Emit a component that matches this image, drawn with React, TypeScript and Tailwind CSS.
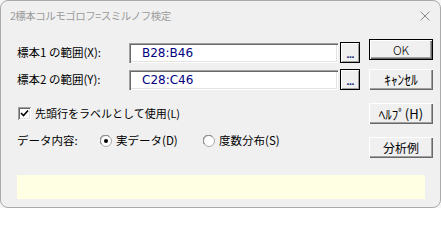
import React from "react";

const JP = "font-['Noto_Sans_CJK_JP','Noto_Sans',sans-serif]";

function Btn({ label, def, size }: { label: string; def?: boolean; size?: string }) {
  return (
    <div
      className={
        "w-[64px] h-[21px] flex items-center justify-center bg-[#f0f0f0] text-black leading-none " +
        (def
          ? "border border-black shadow-[inset_1px_1px_0_#fff,inset_-1px_-1px_0_#696969,inset_-2px_-2px_0_#a0a0a0]"
          : "shadow-[inset_1px_1px_0_#fff,inset_-1px_-1px_0_#696969,inset_-2px_-2px_0_#a0a0a0]")
      }
    >
      <span className={JP + " " + (size || "text-[12px]")}>{label}</span>
    </div>
  );
}

function RangeRow({ label, value }: { label: string; value: string }) {
  return (
    <div className="flex items-center h-[21px]">
      <div className={"w-[112px] text-[11.5px] leading-none text-black " + JP}>{label}</div>
      <div className="w-[209px] h-[20px] bg-white flex items-center pl-[13px] shadow-[inset_1px_1px_0_#a0a0a0,inset_2px_2px_0_#696969,inset_-1px_-1px_0_#fff,inset_-2px_-2px_0_#e3e3e3]">
        <span className="font-['DejaVu_Sans',sans-serif] text-[12px] leading-none text-[#000080] pt-[1px]">{value}</span>
      </div>
      <div className="ml-[2px] w-[20px] h-[21px] border border-black bg-[#f0f0f0] flex items-end justify-center pb-[2px] shadow-[inset_1px_1px_0_#fff,inset_-1px_-1px_0_#a0a0a0]">
        <span className="font-['DejaVu_Sans',sans-serif] text-[9px] leading-none font-bold text-[#1a2a7a] tracking-[-1px]">...</span>
      </div>
    </div>
  );
}

function Radio({ on }: { on?: boolean }) {
  return (
    <svg width="12" height="12" viewBox="0 0 12 12">
      <circle cx="6" cy="6" r="5.5" fill="#fff" stroke="#a8a8a8" />
      <path d="M1.6 9.2 A5 5 0 0 1 9.2 1.6" fill="none" stroke="#7a7a7a" strokeWidth="1" />
      {on && <circle cx="6" cy="6" r="2" fill="#000" />}
    </svg>
  );
}

export default function App() {
  return (
    <div className="w-[441px] h-[208px] bg-[#f6f6f6]">
      <div className="w-[441px] h-[208px] rounded-[8px] border border-[#ababab] bg-[#f0f0f0] flex flex-col overflow-hidden">
        {/* title bar */}
        <div className="h-[29px] flex items-center pl-[9px] pr-[10px] pt-[1px]">
          <span className={"text-[10.5px] leading-none tracking-[-0.5px] text-[#9a9a9a] " + JP}>
            2標本コルモゴロフ=スミルノフ検定
          </span>
          <div className="ml-auto">
            <svg width="10" height="10" viewBox="0 0 10 10">
              <path d="M0.5 0.5 L9.5 9.5 M9.5 0.5 L0.5 9.5" stroke="#8a8a8a" strokeWidth="1" />
            </svg>
          </div>
        </div>
        {/* body */}
        <div className="flex flex-col">
          <div className="flex h-[128px] pl-[16px]">
            <div className="w-[352px] flex flex-col">
              <div className="mt-[12px]">
                <RangeRow label="標本1 の範囲(X):" value="B28:B46" />
              </div>
              <div className="mt-[6px]">
                <RangeRow label="標本2 の範囲(Y):" value="C28:C46" />
              </div>
              <div className="mt-[15px] h-[16px] flex items-center">
                <div className="ml-[1px] w-[13px] h-[13px] bg-white flex items-center justify-center shadow-[inset_1px_1px_0_#a0a0a0,inset_-1px_-1px_0_#fff,inset_2px_2px_0_#696969,inset_-2px_-2px_0_#e3e3e3]">
                  <svg width="9" height="9" viewBox="0 0 9 9">
                    <path d="M1 4 L3.5 6.5 L8 1.5" fill="none" stroke="#000" strokeWidth="1.6" />
                  </svg>
                </div>
                <span className={"ml-[4px] text-[11px] leading-none text-black " + JP}>
                  先頭行をラベルとして使用(L)
                </span>
              </div>
              <div className="mt-[12px] h-[16px] flex items-center">
                <div className={"w-[83px] text-[11.5px] leading-none text-black " + JP}>データ内容:</div>
                <div className="w-[103px] flex items-center">
                  <Radio on />
                  <span className={"ml-[4px] text-[11.5px] leading-none text-black " + JP}>実データ(D)</span>
                </div>
                <div className="flex items-center">
                  <Radio />
                  <span className={"ml-[4px] text-[11.5px] leading-none text-black " + JP}>度数分布(S)</span>
                </div>
              </div>
            </div>
            <div className="w-[64px] flex flex-col">
              <div className="mt-[9px]">
                <Btn label="OK" def size="text-[12px] font-light" />
              </div>
              <div className="mt-[9px]">
                <Btn label="ｷｬﾝｾﾙ" size="text-[13.5px]" />
              </div>
              <div className="mt-[13px]">
                <Btn label="ﾍﾙﾌﾟ(H)" size="text-[13px]" />
              </div>
              <div className="mt-[13px]">
                <Btn label="分析例" size="text-[12px]" />
              </div>
            </div>
          </div>
          <div className="mt-[17px] ml-[16px] w-[408px] h-[24px] bg-[#ffffe3]" />
        </div>
      </div>
    </div>
  );
}
